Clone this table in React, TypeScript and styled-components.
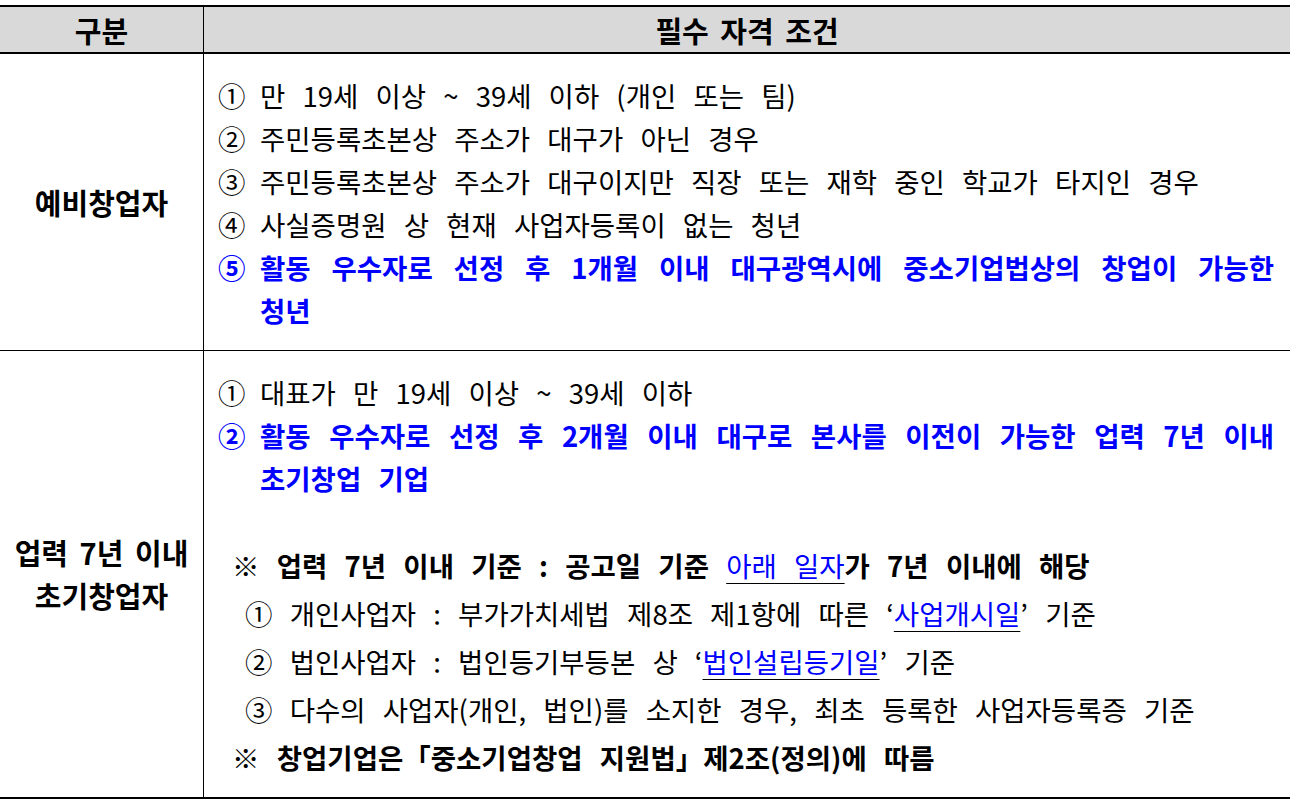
import React from 'react';
import styled, { createGlobalStyle } from 'styled-components';

const GlobalStyle = createGlobalStyle`
  html, body { margin: 0; padding: 0; background: #fff; }
  body {
    font-family: "Noto Sans CJK KR", "Noto Sans", sans-serif;
    color: #000;
  }
`;

const Page = styled.div`
  padding-top: 5px;
`;

const Table = styled.div`
  display: grid;
  grid-template-columns: 203px 1fr;
  border-top: 2px solid #000;
  border-bottom: 2px solid #000;
`;

const HeaderCell = styled.div<{ $divider?: boolean }>`
  background: #d9d9d9;
  height: 45px;
  display: flex;
  align-items: center;
  justify-content: center;
  font-size: 29px;
  font-weight: 700;
  word-spacing: 5px;
  border-bottom: 2px solid #000;
  border-left: ${p => (p.$divider ? '1px solid #000' : 'none')};
`;

const CategoryCell = styled.div<{ $last?: boolean }>`
  display: flex;
  align-items: center;
  justify-content: center;
  text-align: center;
  font-size: 29px;
  font-weight: 700;
  line-height: 43px;
  word-spacing: 5px;
  border-bottom: ${p => (p.$last ? 'none' : '1px solid #000')};
`;

const ContentCell = styled.div<{ $last?: boolean }>`
  border-left: 1px solid #000;
  border-bottom: ${p => (p.$last ? 'none' : '1px solid #000')};
  padding: 20px 16px ${p => (p.$last ? '16px' : '18px')} 14px;
  font-size: 27.5px;
  line-height: 43px;
  word-spacing: 11px;
`;

const Item = styled.div<{ $accent?: boolean }>`
  display: flex;
  color: ${p => (p.$accent ? '#0000ff' : '#000')};
  font-weight: ${p => (p.$accent ? 700 : 400)};
`;

const Marker = styled.span`
  flex: 0 0 42px;
`;

const ItemText = styled.span`
  flex: 1;
  text-align: justify;
  word-break: keep-all;
`;

const Note = styled.div`
  margin: 41px 0 0 14px;
  line-height: 48px;
`;

const NoteTitle = styled.div`
  font-weight: 700;
`;

const SubItem = styled.div`
  padding-left: 13px;
`;

const Link = styled.span`
  color: #0000ff;
  font-weight: 400;
  text-decoration: underline;
  text-decoration-color: #000;
  text-underline-offset: 6px;
  text-decoration-thickness: 1px;
`;

export default function App() {
  return (
    <>
      <GlobalStyle />
      <Page>
        <Table>
          <HeaderCell>구분</HeaderCell>
          <HeaderCell $divider>필수 자격 조건</HeaderCell>

          <CategoryCell>예비창업자</CategoryCell>
          <ContentCell>
            <Item><Marker>①</Marker><ItemText>만 19세 이상 ~ 39세 이하 (개인 또는 팀)</ItemText></Item>
            <Item><Marker>②</Marker><ItemText>주민등록초본상 주소가 대구가 아닌 경우</ItemText></Item>
            <Item><Marker>③</Marker><ItemText>주민등록초본상 주소가 대구이지만 직장 또는 재학 중인 학교가 타지인 경우</ItemText></Item>
            <Item><Marker>④</Marker><ItemText>사실증명원 상 현재 사업자등록이 없는 청년</ItemText></Item>
            <Item $accent><Marker>⑤</Marker><ItemText>활동 우수자로 선정 후 1개월 이내 대구광역시에 중소기업법상의 창업이 가능한 청년</ItemText></Item>
          </ContentCell>

          <CategoryCell $last>업력 7년 이내<br />초기창업자</CategoryCell>
          <ContentCell $last>
            <Item><Marker>①</Marker><ItemText>대표가 만 19세 이상 ~ 39세 이하</ItemText></Item>
            <Item $accent><Marker>②</Marker><ItemText>활동 우수자로 선정 후 2개월 이내 대구로 본사를 이전이 가능한 업력 7년 이내 초기창업 기업</ItemText></Item>
            <Note>
              <NoteTitle>※ 업력 7년 이내 기준 : 공고일 기준 <Link>아래 일자</Link>가 7년 이내에 해당</NoteTitle>
              <SubItem>① 개인사업자 : 부가가치세법 제8조 제1항에 따른 ‘<Link>사업개시일</Link>’ 기준</SubItem>
              <SubItem>② 법인사업자 : 법인등기부등본 상 ‘<Link>법인설립등기일</Link>’ 기준</SubItem>
              <SubItem>③ 다수의 사업자(개인, 법인)를 소지한 경우, 최초 등록한 사업자등록증 기준</SubItem>
              <NoteTitle>※ 창업기업은「중소기업창업 지원법」제2조(정의)에 따름</NoteTitle>
            </Note>
          </ContentCell>
        </Table>
      </Page>
    </>
  );
}
